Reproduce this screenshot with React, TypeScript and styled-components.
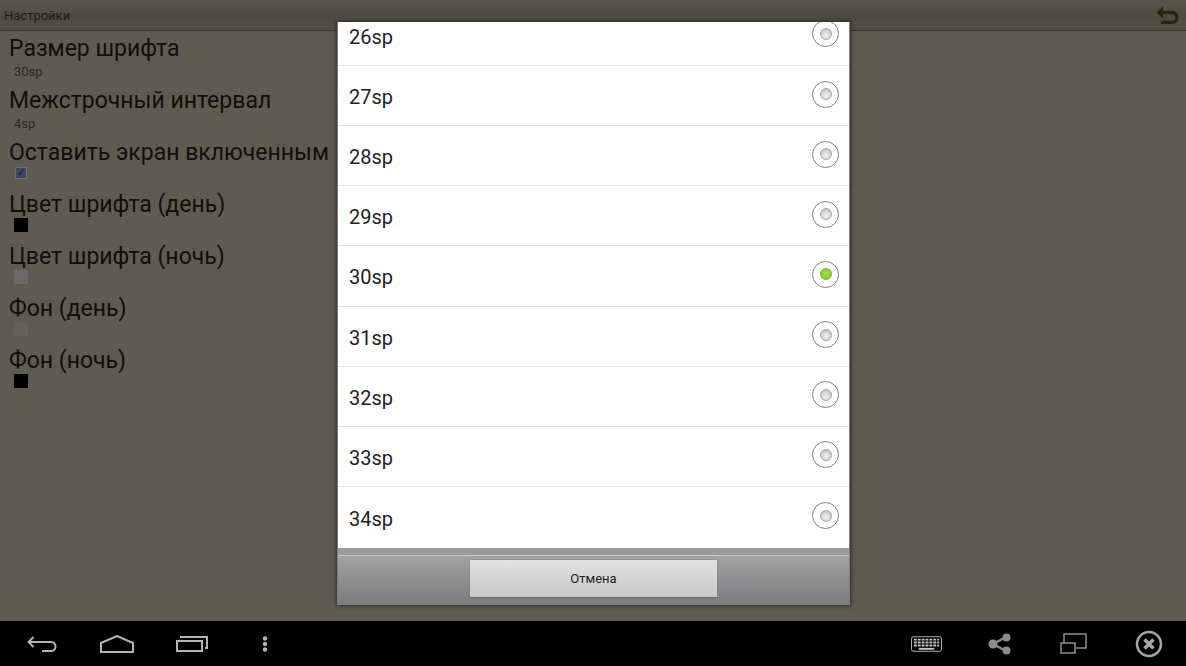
import React from "react"
import styled,{createGlobalStyle} from "styled-components"

const Global=createGlobalStyle`
html,body{margin:0;padding:0;background:#000;}
*{box-sizing:border-box;}
`;
const Page=styled.div`
position:relative;
width:1186px;
height:666px;
overflow:hidden;
display:flex;
flex-direction:column;
font-family:Roboto,"Noto Sans",sans-serif;
background:#000;
`;
const Screen=styled.div`
flex:0 0 621px;
background:#5f5b4f;
display:flex;
flex-direction:column;
`;
const ActionBar=styled.div`
height:31px;
flex:none;
display:flex;
align-items:center;
justify-content:space-between;
padding:0 8px 0 4px;
background:linear-gradient(#59554a,#4e4a3f 60%,#545044);
border-bottom:1px solid #35332b;
`;
const BarTitle=styled.span`
font-size:13px;
color:#1d1c17;
`;
const Settings=styled.div`
display:flex;
flex-direction:column;
`;
const Row=styled.div`
height:52px;
flex:none;
padding:4px 0 0 9px;
border-bottom:1px solid #5b574b;
display:flex;
flex-direction:column;
`;
const RowTitle=styled.div`
font-size:23px;
line-height:27px;
color:#100f0c;
white-space:nowrap;
`;
const RowValue=styled.div`
font-size:13px;
line-height:16px;
margin:2px 0 0 5px;
color:#2b2a23;
`;
const Swatch=styled.div<{$color:string}>`
width:14px;
height:14px;
margin:0 0 0 5px;
background:${p=>p.$color};
`;
const CheckBox=styled.div`
width:12px;
height:12px;
margin:1px 0 0 6px;
background:#3d4a66;
border:1px solid #6d7080;
color:#10131c;
font-size:11px;
line-height:10px;
text-align:center;
`;
const Dialog=styled.div`
position:absolute;
left:337px;
top:22px;
width:513px;
height:583px;
display:flex;
flex-direction:column;
border-left:1px solid #807f79;
border-right:1px solid #807f79;
box-shadow:0 0 4px 1px #2f2d26;
`;
const List=styled.div`
height:526px;
flex:none;
overflow:hidden;
background:#fff;
`;
const Options=styled.div`
margin-top:-16.2px;
`;
const Option=styled.div`
height:60.15px;
display:flex;
align-items:center;
justify-content:space-between;
padding:0 10px 0 11px;
border-bottom:1px solid #e2e2e2;
&:last-child{border-bottom:none;}
`;
const OptionLabel=styled.span`
font-size:20px;
color:#222;
margin-top:3px;
`;
const Radio=styled.div`
width:27px;
height:27px;
margin-top:-3px;
border-radius:50%;
background:#fff;
border:1.5px solid #7d7d7d;
display:flex;
align-items:center;
justify-content:center;
`;
const RadioDot=styled.div<{$on:boolean}>`
width:12px;
height:12px;
border-radius:50%;
border:1px solid ${p=>p.$on?"#79b82c":"#a8a8a8"};
background:${p=>p.$on
  ?"radial-gradient(circle at 50% 40%,#a6e04a,#76c322)"
  :"radial-gradient(circle at 50% 65%,#f4f4f4,#b8b8b8)"};
`;
const Footer=styled.div`
flex:1;
display:flex;
flex-direction:column;
`;
const Strip=styled.div`
height:8px;
flex:none;
background:#9a9a9a;
border-bottom:1px solid #c9c9c9;
`;
const ButtonBar=styled.div`
flex:1;
display:flex;
justify-content:center;
align-items:flex-start;
padding-top:4px;
background:linear-gradient(#a2a2a2,#7a7b7e);
`;
const CancelButton=styled.div`
width:247px;
height:38px;
display:flex;
align-items:center;
justify-content:center;
font-size:13px;
color:#1e1e1e;
background:linear-gradient(#e2e2e2,#c8c8c8);
border-bottom:1px solid #6d6d6d;
box-shadow:0 0 1px #666;
`;
const NavBar=styled.div`
flex:1;
display:flex;
align-items:center;
justify-content:space-between;
padding:0 23px 0 27px;
background:#000;
`;
const NavGroup=styled.div<{$gap:number}>`
display:flex;
align-items:center;
gap:${p=>p.$gap}px;
`;
const NavIcon=styled.svg`
display:block;
fill:none;
stroke:#b4b4b4;
stroke-width:2;
`;
const WindowIcon=styled(NavIcon)`
stroke:#8f8f8f;
stroke-width:1.5;
`;
const MenuDots=styled.svg`
display:block;
margin-left:12px;
fill:#b4b4b4;
`;
const KeyboardIcon=styled.svg`
display:block;
margin-right:-2px;
`;

const BackArrow=()=>(
  <svg width="22" height="18" viewBox="0 0 22 18" fill="none" stroke="#2c240f" strokeWidth="3.4">
    <path d="M5 6.500h11a5 5 0 0 1 0 10H5"/>
    <path d="M7 0.500 V12.500 L0.500 6.500 Z" fill="#2c240f" stroke="none"/>
  </svg>
)

const options=[26,27,28,29,30,31,32,33,34]

const App=()=>{
  return(
    <Page>
      <Global/>
      <Screen>
        <ActionBar>
          <BarTitle>Настройки</BarTitle>
          <BackArrow/>
        </ActionBar>
        <Settings>
          <Row><RowTitle>Размер шрифта</RowTitle><RowValue>30sp</RowValue></Row>
          <Row><RowTitle>Межстрочный интервал</RowTitle><RowValue>4sp</RowValue></Row>
          <Row><RowTitle>Оставить экран включенным</RowTitle><CheckBox>✓</CheckBox></Row>
          <Row><RowTitle>Цвет шрифта (день)</RowTitle><Swatch $color="#000"/></Row>
          <Row><RowTitle>Цвет шрифта (ночь)</RowTitle><Swatch $color="#6b6a68"/></Row>
          <Row><RowTitle>Фон (день)</RowTitle><Swatch $color="#646156"/></Row>
          <Row><RowTitle>Фон (ночь)</RowTitle><Swatch $color="#000"/></Row>
        </Settings>
      </Screen>
      <NavBar>
        <NavGroup $gap={42}>
          <NavIcon width="31" height="18" viewBox="0 0 31 18">
            <path d="M6.500 2 L1.500 7 L6.500 12"/>
            <path d="M1.500 7H24a4.500 4.500 0 0 1 0 9H15"/>
          </NavIcon>
          <NavIcon width="34" height="18" viewBox="0 0 34 18">
            <path d="M1 8 L17 1 L33 8 V17 H1 Z"/>
          </NavIcon>
          <NavIcon width="32" height="17" viewBox="0 0 32 17">
            <rect x="1" y="6" width="25" height="10"/>
            <path d="M5 3 V2 H31 V13 H29"/>
          </NavIcon>
          <MenuDots width="6" height="16" viewBox="0 0 6 16">
            <circle cx="3" cy="2.500" r="2.200"/>
            <circle cx="3" cy="8" r="2.200"/>
            <circle cx="3" cy="13.500" r="2.200"/>
          </MenuDots>
        </NavGroup>
        <NavGroup $gap={48}>
          <KeyboardIcon width="31" height="16" viewBox="0 0 32 16">
            <rect x="0.500" y="0.500" width="31" height="15" rx="2" fill="none" stroke="#b4b4b4"/>
            <path d="M3 3.500h26M3 6.500h26M3 9.500h26" stroke="#c4c4c4" strokeWidth="2" strokeDasharray="3 1"/>
            <path d="M8 13h16" stroke="#c4c4c4" strokeWidth="2"/>
          </KeyboardIcon>
          <svg width="24" height="22" viewBox="0 0 24 22">
            <path d="M5 11 L18 4 M5 11 L18 18" stroke="#8c8c8c" strokeWidth="2.500"/>
            <circle cx="5" cy="11" r="4.500" fill="#8c8c8c"/>
            <circle cx="18.500" cy="4.500" r="4" fill="#8c8c8c"/>
            <circle cx="18.500" cy="17.500" r="4" fill="#8c8c8c"/>
          </svg>
          <WindowIcon width="27" height="21" viewBox="0 0 27 21">
            <path d="M4 10 V1 H26 V15 H16"/>
            <rect x="1" y="10" width="14" height="10"/>
          </WindowIcon>
          <svg width="28" height="28" viewBox="0 0 28 28" fill="none" stroke="#a6a6a6">
            <circle cx="14" cy="14" r="12" strokeWidth="2.500"/>
            <path d="M9.500 9.500 L18.500 18.500 M18.500 9.500 L9.500 18.500" strokeWidth="3.500"/>
          </svg>
        </NavGroup>
      </NavBar>
      <Dialog>
        <List>
          <Options>
            {options.map((val)=>{
              return(
                <Option key={val}>
                  <OptionLabel>{val}sp</OptionLabel>
                  <Radio><RadioDot $on={val===30}/></Radio>
                </Option>
              )
            })}
          </Options>
        </List>
        <Footer>
          <Strip/>
          <ButtonBar><CancelButton>Отмена</CancelButton></ButtonBar>
        </Footer>
      </Dialog>
    </Page>
  )
}
export default App;
